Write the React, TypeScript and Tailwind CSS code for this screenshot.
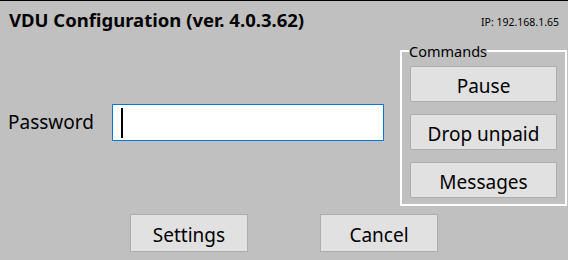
import React from "react";

const FONT = { fontFamily: '"Noto Sans", "Open Sans", sans-serif' };

function WinButton({ label, className = "" }: { label: string; className?: string }) {
  return (
    <button
      type="button"
      className={`bg-[#e1e1e1] border border-[#adadad] text-[19px] text-black leading-none pt-[4px] ${className}`}
    >
      {label}
    </button>
  );
}

export default function App() {
  return (
    <div
      className="w-[568px] h-[260px] bg-[#c0c0c0] border-t border-black flex flex-col overflow-hidden"
      style={FONT}
    >
      {/* Header */}
      <div className="flex justify-between items-start h-[39px] pl-[9px] pr-[9px] pt-[7px]">
        <h1 className="font-bold text-[18.5px] leading-[24px] text-black">
          VDU Configuration (ver. 4.0.3.62)
        </h1>
        <span className="text-[10.5px] leading-[14px] text-black mt-[7px]">IP: 192.168.1.65</span>
      </div>

      {/* Main */}
      <div className="flex h-[166px]">
        <div className="flex items-start pt-[64px] w-[384px] shrink-0">
          <label className="w-[112px] pl-[8px] text-[19px] leading-[37px] text-black">Password</label>
          <div className="w-[272px] h-[37px] bg-white border border-[#0078d7] flex items-center pl-[8px]">
            <div className="w-[2px] h-[30px] bg-black" />
          </div>
        </div>
        <fieldset className="ml-[16px] w-[167px] h-[163px] mt-[3px] border-2 border-white pl-[8px] pr-[8px] pt-[7px] flex flex-col gap-[12px] min-w-0">
          <legend className="text-[14.5px] leading-[16px] text-black px-0 ml-[-1px]">Commands</legend>
          <WinButton label="Pause" className="h-[36px] w-[147px]" />
          <WinButton label="Drop unpaid" className="h-[36px] w-[147px]" />
          <WinButton label="Messages" className="h-[36px] w-[147px]" />
        </fieldset>
      </div>

      {/* Footer buttons */}
      <div className="flex pl-[130px] gap-[72px] mt-[8px]">
        <WinButton label="Settings" className="w-[118px] h-[38px]" />
        <WinButton label="Cancel" className="w-[118px] h-[38px]" />
      </div>
    </div>
  );
}
